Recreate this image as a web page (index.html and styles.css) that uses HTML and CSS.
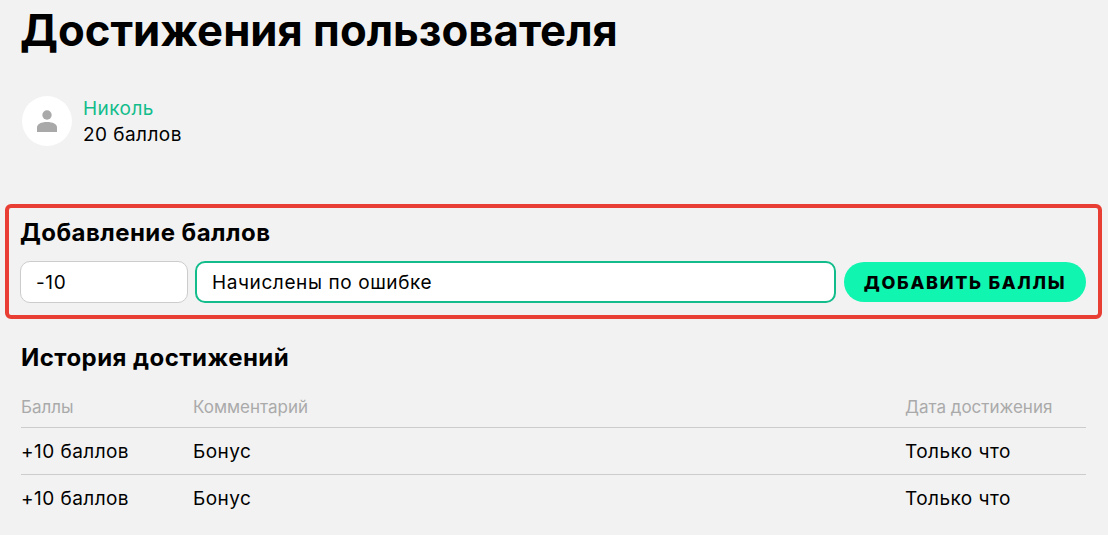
FILE: index.html
```html
<!DOCTYPE html>
<html lang="ru">
<head>
<meta charset="utf-8">
<title>Достижения пользователя</title>
<link rel="stylesheet" href="styles.css">
</head>
<body>
<h1 class="title">Достижения пользователя</h1>
<div class="user">
  <div class="avatar">
    <svg width="20" height="22" viewBox="0 0 20 22"><circle cx="10" cy="5" r="4.700" fill="#a9a9a9"/><path d="M0 22v-4.500C0 14.200 4 12 10 12s10 2.200 10 5.500V22z" fill="#a9a9a9"/></svg>
  </div>
  <div class="user-info">
    <a class="user-name">Николь</a>
    <div class="user-points">20 баллов</div>
  </div>
</div>
<section class="add">
  <h2 class="heading">Добавление баллов</h2>
  <div class="add-row">
    <input class="field field-points" value="-10">
    <input class="field field-comment" value="Начислены по ошибке">
    <button class="btn">ДОБАВИТЬ БАЛЛЫ</button>
  </div>
</section>
<section class="history">
  <h2 class="heading">История достижений</h2>
  <table class="table">
    <thead><tr><th class="c1">Баллы</th><th>Комментарий</th><th class="c3">Дата достижения</th></tr></thead>
    <tbody>
      <tr><td>+10 баллов</td><td>Бонус</td><td>Только что</td></tr>
      <tr><td>+10 баллов</td><td>Бонус</td><td>Только что</td></tr>
    </tbody>
  </table>
</section>
</body>
</html>
```
FILE: styles.css
```css
* { box-sizing: border-box; }
html, body { height: 100%; }
body {
  margin: 0;
  padding: 0 22px 0 21px;
  background: #f2f2f2;
  color: #000;
  font-family: Inter, "Noto Sans", sans-serif;
  overflow: hidden;
}
.title {
  margin: 0 0 0 -1px;
  padding-top: 4px;
  font-size: 43.7px;
  line-height: 53px;
  font-weight: 700;
}
.user { display: flex; align-items: center; gap: 11px; margin-top: 37px; margin-left: 1px; }
.avatar {
  width: 50px; height: 50px; border-radius: 50%; background: #fff;
  display: flex; align-items: center; justify-content: center;
}
.user-info { padding-top: 2px; font-size: 19px; line-height: 26px; letter-spacing: 0.45px; }
.user-name { color: #12bd8b; display: block; }
.add {
  margin: 56px -16px 0 -16px;
  height: 115px;
  padding: 10px 12px 0 11px;
  border: 4px solid #e83e33;
  border-radius: 6px;
}
.heading { margin: 0; font-size: 24px; line-height: 30px; font-weight: 700; letter-spacing: 0.45px; }
.add-row { display: flex; align-items: center; gap: 7px; margin-top: 13px; }
.field {
  height: 42px; padding: 0 15px; background: #fff; border: 1px solid #ccc; border-radius: 10px;
  font: 19px Inter, "Noto Sans", sans-serif; letter-spacing: 0.6px; color: #000; outline: none;
}
.field-points { width: 168px; }
.field-comment { flex: 1; min-width: 0; border: 2px solid #12bd8b; }
.btn {
  width: 242px; height: 40px; margin-left: 1px; border: 0; border-radius: 20px; background: #10f5b0;
  font: 800 18px Inter, "Noto Sans", sans-serif; letter-spacing: 1.7px; color: #000;
}
.history { margin-top: 24px; }
.table { width: 100%; border-collapse: collapse; margin-top: 13px; table-layout: fixed; }
.table th { text-align: left; font-weight: 400; font-size: 17px; color: #aaa; height: 41px; padding: 1px 0 0; border-bottom: 1px solid #ccc; }
.table td { height: 47px; font-size: 19px; letter-spacing: 0.45px; padding: 2px 0 0; border-bottom: 1px solid #ccc; }
.table tr:last-child td { border-bottom: 0; }
.c1 { width: 172px; }
.c3 { width: 181px; }
```
